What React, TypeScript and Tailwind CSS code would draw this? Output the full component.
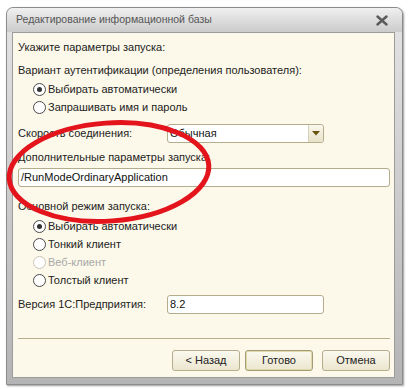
const font = { fontFamily: '"Liberation Sans", Arial, sans-serif' };

type RadioProps = { label: string; checked?: boolean; disabled?: boolean };

function Radio({ label, checked, disabled }: RadioProps) {
  return (
    <div className="flex h-[18px] items-center pl-[15px]">
      <span
        className={
          'flex h-[13px] w-[13px] items-center justify-center rounded-full border bg-white ' +
          (disabled ? 'border-[#c8c4b4]' : 'border-[#4a4a4a]')
        }
      >
        {checked && <span className="h-[5px] w-[5px] rounded-full bg-[#333]" />}
      </span>
      <span className={'ml-[2px] ' + (disabled ? 'text-[#a8a8a8]' : 'text-[#222]')}>
        {label}
      </span>
    </div>
  );
}

function Button({ label, primary }: { label: string; primary?: boolean }) {
  return (
    <div
      className={
        'flex h-[21px] w-[68px] items-center justify-center rounded-[3px] border bg-gradient-to-b from-[#fbf9ef] to-[#ebe6cf] text-[#222] ' +
        (primary ? 'border-[#a39c78] shadow-[inset_0_0_0_1px_#e2d9a8]' : 'border-[#b4ad8c]')
      }
    >
      {label}
    </div>
  );
}

export default function App() {
  return (
    <div className="relative h-[389px] w-[420px] overflow-hidden bg-white text-[11px]" style={font}>
      <div className="ml-[6px] mt-[7px] flex h-[378px] w-[397px] flex-col rounded-t-[7px] border border-[#8c8c8c] bg-gradient-to-b from-[#e4e4e4] to-[#b4b4b4] shadow-[1px_1px_2px_#9a9a9a]">
        <div className="flex h-[24px] shrink-0 items-center justify-between rounded-t-[7px] bg-gradient-to-b from-[#f0f0f0] to-[#cbcbcb] pl-[9px] pr-[14px]">
          <span className="text-[10.5px] text-[#555]">Редактирование информационной базы</span>
          <svg width="12" height="11" viewBox="0 0 12 11">
            <path d="M1.5 1.5 L10.5 9.5 M10.5 1.5 L1.5 9.5" stroke="#5a5a5a" strokeWidth="2.4" strokeLinecap="round" />
          </svg>
        </div>
        <div className="ml-[5px] mr-[7px] mb-[6px] flex flex-1 flex-col border border-[#9c9c9c] bg-[#fcf9ea] px-[5px] text-[#222]">
          <div className="mt-[5px] flex h-[18px] items-center">Укажите параметры запуска:</div>
          <div className="mt-[5px] flex h-[18px] items-center">Вариант аутентификации (определения пользователя):</div>
          <div className="mt-[1px]">
            <Radio label="Выбирать автоматически" checked />
            <Radio label="Запрашивать имя и пароль" />
          </div>
          <div className="mt-[8px] flex h-[19px] items-center">
            <span className="w-[149px]">Скорость соединения:</span>
            <div className="flex h-[19px] w-[157px] items-center rounded-[3px] border border-[#b4ad8c] bg-white">
              <span className="flex-1 pl-[2px] text-[#111]">Обычная</span>
              <div className="flex h-full w-[15px] items-center justify-center rounded-r-[3px] border-l border-[#d4cfb8] bg-gradient-to-b from-[#faf8ee] to-[#e8e2c8]">
                <svg width="8" height="5" viewBox="0 0 8 5">
                  <path d="M0 0 H8 L4 4.5 Z" fill="#6b5410" />
                </svg>
              </div>
            </div>
          </div>
          <div className="mt-[5px] flex h-[18px] items-center">Дополнительные параметры запуска:</div>
          <div className="mt-[2px] flex h-[19px] w-[372px] items-center rounded-[3px] border border-[#b4ad8c] bg-white pl-[2px] text-[#111]">
            /RunModeOrdinaryApplication
          </div>
          <div className="mt-[10px] flex h-[18px] items-center">Основной режим запуска:</div>
          <div className="mt-[2px]">
            <Radio label="Выбирать автоматически" checked />
            <Radio label="Тонкий клиент" />
            <Radio label="Веб-клиент" disabled />
            <Radio label="Толстый клиент" />
          </div>
          <div className="mt-[6px] flex h-[19px] items-center">
            <span className="w-[149px]">Версия 1С:Предприятия:</span>
            <div className="flex h-[19px] w-[157px] items-center rounded-[3px] border border-[#b4ad8c] bg-white pl-[2px] text-[#111]">
              8.2
            </div>
          </div>
          <div className="mt-[24px] h-px w-[372px] bg-[#b8b08a]" />
          <div className="mt-[11px] flex w-[372px] justify-end gap-[5px]">
            <Button label="< Назад" />
            <Button label="Готово" primary />
            <div className="ml-[4px]">
              <Button label="Отмена" />
            </div>
          </div>
        </div>
      </div>
      <svg className="pointer-events-none absolute left-0 top-0" width="420" height="389" viewBox="0 0 420 389">
        <ellipse
          cx="109"
          cy="172"
          rx="100"
          ry="49"
          transform="rotate(-4 109 172)"
          fill="none"
          stroke="#e3141c"
          strokeWidth="5"
        />
      </svg>
    </div>
  );
}
